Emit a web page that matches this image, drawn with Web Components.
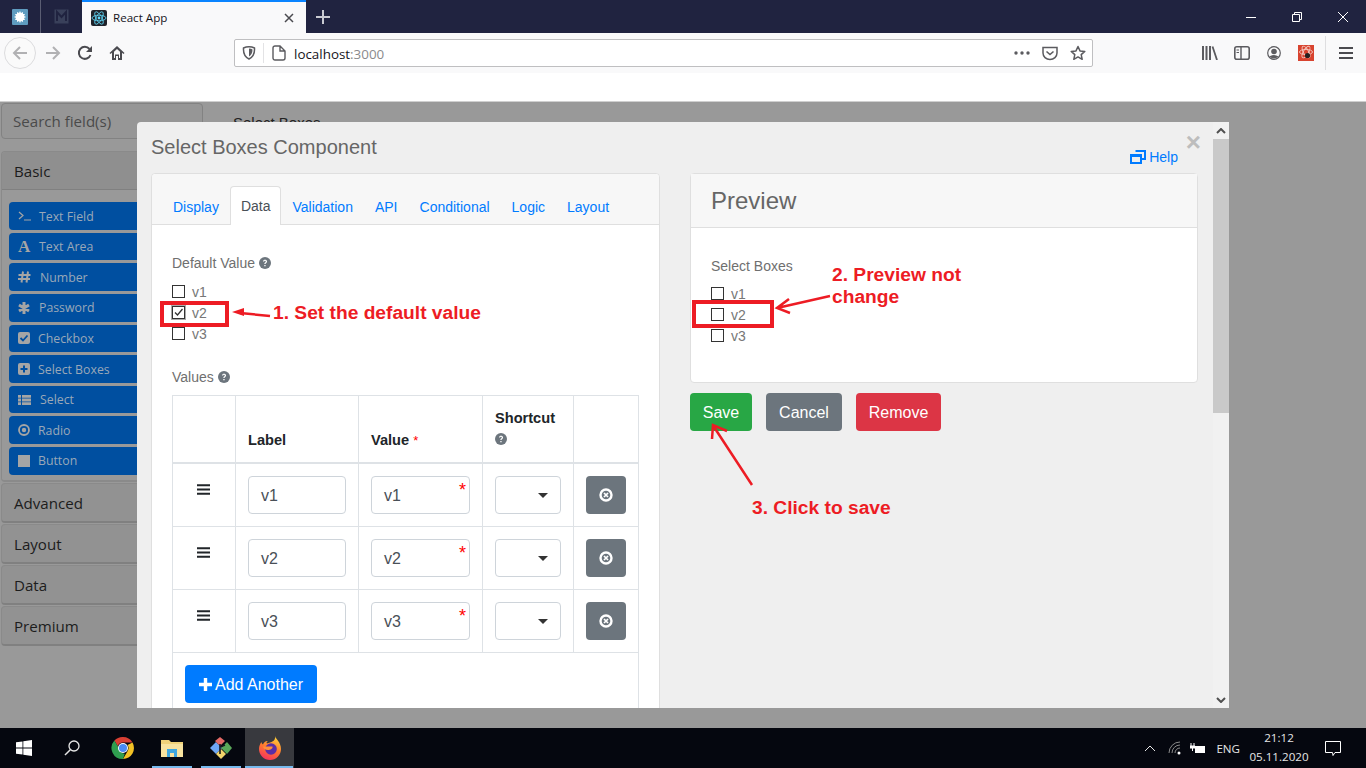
<!DOCTYPE html>
<html>
<head>
<meta charset="utf-8">
<title>React App</title>
<style>
  html, body { margin: 0; padding: 0; height: 100%; }
  body {
    width: 1366px;
    height: 768px;
    overflow: hidden;
    display: flex;
    flex-direction: column;
    position: relative;
    font-family: "Liberation Sans", Arial, sans-serif;
  }
</style>
</head>
<body>
  <browser-chrome></browser-chrome>
  <app-page></app-page>
  <win-taskbar></win-taskbar>
  <note-layer></note-layer>

<script>
// shared font awesome like help icon
const helpIcon = `<svg width="12" height="12" viewBox="0 0 12 12" style="vertical-align:-1px"><circle cx="6" cy="6" r="6" fill="#6c757d"/><path d="M4 4.6C4 3.4 5 2.8 6 2.8s2.1.6 2.1 1.7c0 1.5-1.6 1.4-1.6 2.6H5.3c0-1.8 1.5-1.7 1.5-2.6 0-.4-.4-.7-.8-.7-.5 0-.8.3-.9.8zM5.3 7.9h1.3v1.3H5.3z" fill="#fff"/></svg>`;

class BrowserChrome extends HTMLElement {
  constructor() {
    super();
    this.shadowDOM = this.attachShadow({ mode: 'open' });
  }

  connectedCallback() {
    this.shadowDOM.innerHTML = `
      <style>
        :host { display: block; height: 101px; background: #fff; font-family: "Open Sans", sans-serif; flex: none; }
        .tabs { height: 33px; background: #202340; display: flex; align-items: stretch; }
        .tab { width: 41px; display: flex; align-items: center; justify-content: center; box-sizing: border-box; padding-right: 1px; }
        .tab.sep { border-right: 1px solid #5a5d72; }
        .active {
          width: 224px; background: #f9f9fa; border-top: 2px solid #0a84ff; box-sizing: border-box;
          display: flex; align-items: center; padding: 0 12px 0 9px; gap: 6px;
          font-size: 11.600px; color: #15141a;
        }
        .active span { flex: 1; }
        .plus { width: 34px; display: flex; align-items: center; justify-content: center; }
        .fill { flex: 1; }
        .win { width: 46px; display: flex; align-items: center; justify-content: center; }
        .bar { height: 40px; background: #f9f9fa; display: flex; align-items: center; padding-left: 4px; }
        .btn { width: 32px; height: 32px; display: flex; align-items: center; justify-content: center; flex: none; }
        .btn.back { border: 1px solid #dcdcde; border-radius: 50%; box-sizing: border-box; background: #fafafa; margin-right: 1px; }
        .url {
          margin-left: 101px; width: 859px; height: 28px; box-sizing: border-box; background: #fff;
          border: 1px solid #bfbfc1; border-radius: 2px; display: flex; align-items: center;
          font-size: 13.4px; color: #15141a; flex: none;
        }
        .url .shield { width: 28px; display: flex; justify-content: center; }
        .url .line { width: 1px; height: 20px; background: #e3e3e5; }
        .url .page { width: 30px; display: flex; justify-content: center; }
        .url .host { flex: 1; padding-top: 1px; }
        .url .host i { font-style: normal; color: #8a8a8c; }
        .url .act { width: 28px; display: flex; justify-content: center; }
        .right { display: flex; align-items: center; margin-left: 101px; }
        .vline { width: 1px; height: 34px; background: #dedee0; margin: 0 4px 0 3px; }
      </style>
      <div class="tabs">
        <div class="tab sep">
          <svg width="16" height="16" viewBox="0 0 16 16"><rect width="16" height="16" rx="1" fill="#5f9cc0"/><path d="M8 2l1 2 2-1 0 2 2 0-1 2 2 1-2 1 1 2-2 0 0 2-2-1-1 2-1-2-2 1 0-2-2 0 1-2-2-1 2-1-1-2 2 0 0-2 2 1z" fill="#fff"/></svg>
        </div>
        <div class="tab">
          <svg width="15" height="15" viewBox="0 0 15 15"><rect x=".5" y=".5" width="14" height="14" fill="#39405a"/><path d="M3 12V3l4.500 5L12 3v9" fill="none" stroke="#202340" stroke-width="2"/></svg>
        </div>
        <div class="active">
          <svg width="16" height="16" viewBox="0 0 16 16"><rect width="16" height="16" rx="2" fill="#20232a"/><g fill="none" stroke="#61dafb" stroke-width=".8"><ellipse cx="8" cy="8" rx="7" ry="2.800"/><ellipse cx="8" cy="8" rx="7" ry="2.800" transform="rotate(60 8 8)"/><ellipse cx="8" cy="8" rx="7" ry="2.800" transform="rotate(120 8 8)"/></g><circle cx="8" cy="8" r="1.400" fill="#61dafb"/></svg>
          <span>React App</span>
          <svg width="10" height="10" viewBox="0 0 10 10"><path d="M1 1l8 8M9 1l-8 8" stroke="#4a4a4f" stroke-width="1.500"/></svg>
        </div>
        <div class="plus">
          <svg width="14" height="14" viewBox="0 0 14 14"><path d="M7 0v14M0 7h14" stroke="#c9cad2" stroke-width="2"/></svg>
        </div>
        <div class="fill"></div>
        <div class="win"><svg width="10" height="10" viewBox="0 0 10 10"><path d="M0 5.500h10" stroke="#fff"/></svg></div>
        <div class="win"><svg width="10" height="10" viewBox="0 0 10 10"><path d="M.5 2.500h7v7h-7zM2.500 2.500V.5h7v7h-2" fill="none" stroke="#fff"/></svg></div>
        <div class="win"><svg width="10" height="10" viewBox="0 0 10 10"><path d="M0 0l10 10M10 0L0 10" stroke="#fff"/></svg></div>
      </div>
      <div class="bar">
        <div class="btn back"><svg width="16" height="16" viewBox="0 0 16 16"><path d="M15 8H2M8 2L2 8l6 6" fill="none" stroke="#b1b1b3" stroke-width="2"/></svg></div>
        <div class="btn"><svg width="16" height="16" viewBox="0 0 16 16"><path d="M1 8h13M8 2l6 6-6 6" fill="none" stroke="#b1b1b3" stroke-width="2"/></svg></div>
        <div class="btn"><svg width="16" height="16" viewBox="0 0 16 16"><path d="M13.500 10A6 6 0 1 1 12.500 4" fill="none" stroke="#4a4a4f" stroke-width="2"/><path d="M15 1v6H9z" fill="#4a4a4f"/></svg></div>
        <div class="btn"><svg width="16" height="16" viewBox="0 0 16 16"><path d="M8 1L0.500 8l1 1L3 7.800V15h4v-4h2v4h4V7.800L14.500 9l1-1z" fill="#4a4a4f"/><path d="M5 6.800L8 4l3 2.800V13h-1V9.500H6V13H5z" fill="#f9f9fa"/></svg></div>
        <div class="url">
          <div class="shield"><svg width="14" height="14" viewBox="0 0 14 14"><path d="M1.500 2Q7-.5 12.500 2 13 10 7 13 1 10 1.500 2z" fill="none" stroke="#5b5b5f" stroke-width="1.500"/><path d="M7 2.500Q9.500 2.500 10.500 3.500 10.500 8.500 7 10.500z" fill="#5b5b5f"/></svg></div>
          <div class="line"></div>
          <div class="page"><svg width="14" height="16" viewBox="0 0 14 16"><path d="M1 3a2 2 0 0 1 2-2h5l5 5v7a2 2 0 0 1-2 2H3a2 2 0 0 1-2-2zM8 1v5h5" fill="none" stroke="#5b5b5f" stroke-width="1.400"/></svg></div>
          <div class="host">localhost<i>:3000</i></div>
          <div class="act"><svg width="16" height="4" viewBox="0 0 16 4"><circle cx="2" cy="2" r="1.700" fill="#5b5b5f"/><circle cx="8" cy="2" r="1.700" fill="#5b5b5f"/><circle cx="14" cy="2" r="1.700" fill="#5b5b5f"/></svg></div>
          <div class="act"><svg width="16" height="15" viewBox="0 0 16 15"><path d="M1 1.500h14V7a7 6.500 0 0 1-14 0z" fill="none" stroke="#5b5b5f" stroke-width="1.500"/><path d="M4.500 5.500L8 8.500l3.500-3" fill="none" stroke="#5b5b5f" stroke-width="1.600"/></svg></div>
          <div class="act"><svg width="16" height="16" viewBox="0 0 16 16"><path d="M8 1.500l2 4.400 4.800.5-3.600 3.200 1 4.700L8 11.900l-4.200 2.400 1-4.700L1.200 6.400 6 5.900z" fill="none" stroke="#5b5b5f" stroke-width="1.500" stroke-linejoin="round"/></svg></div>
        </div>
        <div class="right">
          <div class="btn"><svg width="16" height="14" viewBox="0 0 16 14"><path d="M1 0v14M4.500 0v14M8 0v14" stroke="#5b5b5f" stroke-width="2"/><path d="M10.500 .5L15 14" stroke="#5b5b5f" stroke-width="1.800"/></svg></div>
          <div class="btn"><svg width="16" height="14" viewBox="0 0 16 14"><rect x=".8" y=".8" width="14.400" height="12.400" rx="2" fill="none" stroke="#5b5b5f" stroke-width="1.600"/><path d="M7 1v12" stroke="#5b5b5f" stroke-width="1.400"/><path d="M2.500 4H5M2.500 6.500H5" stroke="#5b5b5f"/></svg></div>
          <div class="btn"><svg width="14" height="14" viewBox="0 0 14 14"><circle cx="7" cy="7" r="6.300" fill="none" stroke="#5b5b5f" stroke-width="1.200"/><circle cx="7" cy="5.500" r="2.800" fill="#5b5b5f"/><path d="M2.500 10.500Q7 7.500 11.500 10.500 7 14.500 2.500 10.500z" fill="#5b5b5f"/></svg></div>
          <div class="btn"><svg width="16" height="16" viewBox="0 0 16 16"><rect width="16" height="16" fill="#d8432f"/><g fill="none" stroke="#f4c9c0" stroke-width=".9"><ellipse cx="8" cy="7" rx="6.500" ry="2.600"/><ellipse cx="8" cy="7" rx="6.500" ry="2.600" transform="rotate(60 8 7)"/><ellipse cx="8" cy="7" rx="6.500" ry="2.600" transform="rotate(120 8 7)"/></g><circle cx="9.500" cy="10.500" r="2.600" fill="#26201f"/></svg></div>
          <div class="vline"></div>
          <div class="btn"><svg width="14" height="12" viewBox="0 0 14 12"><path d="M0 1h14M0 6h14M0 11h14" stroke="#4a4a4f" stroke-width="1.800"/></svg></div>
        </div>
      </div>
    `;
  }
}

class AppPage extends HTMLElement {
  constructor() {
    super();
    this.shadowDOM = this.attachShadow({ mode: 'open' });
  }

  connectedCallback() {
    this.shadowDOM.innerHTML = `
      <style>
        :host { display: block; flex: 1; min-height: 0; background: #999; position: relative; overflow: hidden; border-top: 1px solid #cfcfcf; box-sizing: border-box; }
        .wrap { display: flex; gap: 30px; height: 100%; }
        .behind { font: 15px "Liberation Sans", sans-serif; color: #222; padding-top: 12px; }
      </style>
      <div class="wrap">
        <form-sidebar></form-sidebar>
        <div class="behind">Select Boxes</div>
      </div>
      <edit-modal></edit-modal>
    `;
  }
}

class FormSidebar extends HTMLElement {
  constructor() {
    super();
    this.shadowDOM = this.attachShadow({ mode: 'open' });
  }

  connectedCallback() {
    const icons = {
      terminal: `<svg width="13" height="10" viewBox="0 0 13 10"><path d="M1 1l4 3.500L1 8M6 9h7" fill="none" stroke="#a5a5a5" stroke-width="1.200"/></svg>`,
      font: `<b style="font:bold 17px 'Liberation Serif',serif;color:#a5a5a5">A</b>`,
      hash: `<svg width="13" height="12" viewBox="0 0 13 12"><path d="M5 .5L3.500 11.500M10 .5L8.500 11.500M.5 4h12M0 8h12" fill="none" stroke="#a5a5a5" stroke-width="2"/></svg>`,
      star: `<svg width="12" height="12" viewBox="0 0 12 12"><path d="M6 6V0M6 6L1 3M6 6l5-3M6 6l-5 3M6 6l5 3M6 6v6" stroke="#a5a5a5" stroke-width="3"/></svg>`,
      check: `<svg width="12" height="12" viewBox="0 0 12 12"><rect width="12" height="12" rx="2" fill="#a5a5a5"/><path d="M2.500 6l2.500 2.500 4.500-5" fill="none" stroke="#004fa0" stroke-width="1.800"/></svg>`,
      plus: `<svg width="12" height="12" viewBox="0 0 12 12"><rect width="12" height="12" rx="2" fill="#a5a5a5"/><path d="M6 2.500v7M2.500 6h7" stroke="#004fa0" stroke-width="2"/></svg>`,
      list: `<svg width="13" height="10" viewBox="0 0 13 10"><path d="M0 0h3v2.800H0zM4 0h9v2.800H4zM0 3.600h3v2.800H0zM4 3.600h9v2.800H4zM0 7.200h3V10H0zM4 7.200h9V10H4z" fill="#a5a5a5"/></svg>`,
      dot: `<svg width="12" height="12" viewBox="0 0 12 12"><circle cx="6" cy="6" r="5" fill="none" stroke="#a5a5a5" stroke-width="1.800"/><circle cx="6" cy="6" r="2.200" fill="#a5a5a5"/></svg>`,
      stop: `<svg width="12" height="12" viewBox="0 0 12 12"><rect width="12" height="12" fill="#a5a5a5"/></svg>`
    };
    const items = [
      ['terminal', 'Text Field', 17], ['font', 'Text Area', 17], ['hash', 'Number', 18],
      ['star', 'Password', 17], ['check', 'Checkbox', 16], ['plus', 'Select Boxes', 16],
      ['list', 'Select', 18], ['dot', 'Radio', 16], ['stop', 'Button', 16]
    ];
    const rows = items.map(([icon, text, gap]) => `
      <div class="item"><span class="ic" style="width:${gap}px">${icons[icon]}</span><span>${text}</span></div>
    `).join('');
    const groups = ['Advanced', 'Layout', 'Data', 'Premium'].map(name => `
      <div class="group">${name}</div>
    `).join('');

    this.shadowDOM.innerHTML = `
      <style>
        :host { display: block; width: 203px; box-sizing: border-box; flex: none; padding: 1px 0 0 1px; font-family: "Open Sans", sans-serif; color: #1c1c1c; }
        .search {
          height: 36px; box-sizing: border-box; border: 1px solid #828282; border-radius: 4px; background: #969696;
          font-size: 15.100px; color: #4a4a4a; padding: 0 11px; display: flex; align-items: center; margin-bottom: 12px;
        }
        .card { border: 1px solid #8a8a8a; border-radius: 4px; border-bottom-width: 2px; margin-bottom: 1px; overflow: hidden; }
        .head { height: 38px; background: #8f8f8f; border-bottom: 1px solid #808080; display: flex; align-items: center; padding-left: 12px; font-size: 15.100px; box-sizing: border-box; }
        .list { padding: 12.300px 7px 5.700px 7px; display: flex; flex-direction: column; gap: 3px; background: #999; }
        .item {
          height: 27.600px; background: #004fa0; border-radius: 4px; color: #9aa8b8; font-size: 12.300px;
          display: flex; align-items: center; padding-left: 9px; box-sizing: border-box;
        }
        .ic { display: inline-flex; align-items: center; margin-right: 4px; }
        .group {
          height: 40px; margin-top: 1px; box-sizing: border-box; background: #929292; border: 1px solid #8a8a8a; border-bottom: 2px solid #808080;
          border-radius: 4px; display: flex; align-items: center; padding-left: 12px; font-size: 15.100px;
        }
      </style>
      <div class="search">Search field(s)</div>
      <div class="card">
        <div class="head">Basic</div>
        <div class="list">${rows}</div>
      </div>
      ${groups}
    `;
  }
}

class CheckRow extends HTMLElement {
  constructor() {
    super();
    this.shadowDOM = this.attachShadow({ mode: 'open' });
  }

  connectedCallback() {
    const checked = this.hasAttribute('checked');
    this.shadowDOM.innerHTML = `
      <style>
        :host { display: flex; align-items: center; height: 21px; gap: 7px; font-size: 14px; color: #777; }
        .box { width: 13px; height: 13px; box-sizing: border-box; border: 1px solid #333; background: #fff; display: flex; }
        .box.on { outline: 1px solid #aaa; }
      </style>
      <span class="box ${checked ? 'on' : ''}">
        ${checked ? '<svg width="11" height="11" viewBox="0 0 11 11"><path d="M2 5.500l2.500 2.500L9.500 2" fill="none" stroke="#333" stroke-width="1.300"/></svg>' : ''}
      </span>
      <slot></slot>
    `;
  }
}

class ValuesTable extends HTMLElement {
  constructor() {
    super();
    this.shadowDOM = this.attachShadow({ mode: 'open' });
  }

  connectedCallback() {
    const rows = ['v1', 'v2', 'v3'].map(v => `
      <div class="row">
        <div class="cell drag"><svg width="13" height="11" viewBox="0 0 13 11"><path d="M0 1.200h13M0 5.500h13M0 9.800h13" stroke="#212529" stroke-width="2"/></svg></div>
        <div class="cell"><div class="input">${v}</div></div>
        <div class="cell"><div class="input">${v}<i>*</i></div></div>
        <div class="cell"><div class="input select"><span class="caret"></span></div></div>
        <div class="cell"><div class="del"><svg width="14" height="14" viewBox="0 0 14 14"><circle cx="7" cy="7" r="5.500" fill="none" stroke="#fff" stroke-width="2.400"/><path d="M5 5l4 4M9 5l-4 4" stroke="#fff" stroke-width="1.700"/></svg></div></div>
      </div>
    `).join('');

    this.shadowDOM.innerHTML = `
      <style>
        :host { display: block; width: 467px; border: solid #dee2e6; border-width: 1px 1px 0 0; box-sizing: border-box; font-size: 14px; color: #212529; }
        .row { display: grid; grid-template-columns: 63px 123px 124px 91px 65px; border-bottom: 1px solid #dee2e6; }
        .row.top { height: 68px; border-bottom-width: 2px; box-sizing: border-box; }
        .cell { border-left: 1px solid #dee2e6; padding: 12px; }
        .top .cell { font-weight: bold; font-size: 14.600px; display: flex; flex-direction: column; justify-content: flex-end; padding-bottom: 11px; box-sizing: border-box; }
        .top .cell span { line-height: 21px; }
        .top .cell.short { padding-top: 12px; justify-content: flex-start; padding-bottom: 0; }
        .top i { color: #f00; font-style: normal; font-weight: normal; font-size: 13px; }
        .drag { text-align: center; line-height: 0; padding: 20px 13px 0 11px; }
        .input {
          height: 38px; box-sizing: border-box; border: 1px solid #ced4da; border-radius: 4px; background: #fff;
          font-size: 16px; color: #495057; padding: 2px 12px 0; display: flex; align-items: center; position: relative;
        }
        .input i { position: absolute; right: 3px; top: 3px; color: #f00; font-style: normal; font-size: 18px; line-height: 20px; }
        .select { width: 66px; }
        .caret { position: absolute; right: 12px; top: 16px; border: 5px solid transparent; border-top-color: #333; border-bottom: 0; }
        .del { width: 40px; height: 38px; background: #6c757d; border-radius: 4px; display: flex; align-items: center; justify-content: center; }
        .foot { border-left: 1px solid #dee2e6; padding: 12px; height: 120px; box-sizing: border-box; }
        .add {
          width: 132px; height: 38px; box-sizing: border-box; padding-top: 1px; background: #007bff; border-radius: 4px; color: #fff; font-size: 16px;
          display: flex; align-items: center; justify-content: center; gap: 3px;
        }
      </style>
      <div class="row top">
        <div class="cell"></div>
        <div class="cell"><span>Label</span></div>
        <div class="cell"><span>Value <i>*</i></span></div>
        <div class="cell short"><span>Shortcut</span><span>${helpIcon}</span></div>
        <div class="cell"></div>
      </div>
      ${rows}
      <div class="foot">
        <div class="add"><svg width="13" height="13" viewBox="0 0 13 13"><path d="M6.500 0v13M0 6.500h13" stroke="#fff" stroke-width="3.400"/></svg>Add Another</div>
      </div>
    `;
  }
}

class EditModal extends HTMLElement {
  constructor() {
    super();
    this.shadowDOM = this.attachShadow({ mode: 'open' });
  }

  connectedCallback() {
    const tabs = ['Display', 'Data', 'Validation', 'API', 'Conditional', 'Logic', 'Layout'].map(name => `
      <span class="tab ${name === 'Data' ? 'on' : ''}">${name}</span>
    `).join('');

    this.shadowDOM.innerHTML = `
      <style>
        :host {
          position: absolute; left: 137px; top: 20px; width: 1092px; height: 586px; background: #efefef;
          border-radius: 4px 0 0 0; overflow: hidden; display: flex; font-family: "Liberation Sans", sans-serif;
        }
        .main { flex: 1; padding: 14px 15px 0 14px; box-sizing: border-box; min-width: 0; }
        .top { height: 37px; display: flex; justify-content: space-between; position: relative; }
        h4 { margin: 0; font-weight: normal; font-size: 20px; line-height: 22px; color: #666; }
        .help { position: absolute; right: 20px; top: 13px; font-size: 14px; color: #007bff; display: flex; align-items: center; gap: 3px; }
        .close { position: absolute; right: -3px; top: -1px; font: bold 26px "Liberation Sans", sans-serif; color: #bdbdbd; line-height: 14px; }
        .cols { display: flex; gap: 30px; }
        .left { width: 509px; flex: none; background: #fff; border: 1px solid #dfdfdf; border-radius: 4px; box-sizing: border-box; }
        .tabs { height: 51px; background: #f7f7f7; border-bottom: 1px solid #dfdfdf; display: flex; align-items: flex-end; padding-left: 10px; box-sizing: border-box; border-radius: 4px 4px 0 0; }
        .tab { font-size: 14px; color: #007bff; height: 38px; line-height: 38px; padding: 0 10px; box-sizing: border-box; margin-bottom: -1px; border: 1px solid transparent; border-bottom: 0; }
        .tab.on { background: #fff; color: #495057; border-color: #dfdfdf; border-radius: 4px 4px 0 0; height: 39px; }
        .body { padding: 28px 20px 0 20px; }
        .lbl { font-size: 14px; color: #6f6f6f; line-height: 20px; }
        .checks { margin: 8px 0 23px; }
        .right { width: 508px; flex: none; }
        .prev { height: 210px; background: #fff; border: 1px solid #dfdfdf; border-radius: 4px; box-sizing: border-box; }
        .prev h3 { margin: 0; height: 54px; background: #f7f7f7; border-bottom: 1px solid #dfdfdf; box-sizing: border-box; font-weight: normal; font-size: 24px; color: #666; display: flex; align-items: center; padding-left: 20px; }
        .prev .in { padding: 28px 20px 0 20px; }
        .prev .checks { margin: 7px 0 0; }
        .btns { display: flex; gap: 14px; margin-top: 10px; }
        .b { height: 38px; box-sizing: border-box; padding-top: 1px; border-radius: 4px; color: #fff; font-size: 16px; display: flex; align-items: center; justify-content: center; }
        .scroll { width: 16px; flex: none; background: #f1f1f1; display: flex; flex-direction: column; }
        .arrow { height: 17px; display: flex; align-items: center; justify-content: center; }
        .thumb { height: 274px; background: #c9c9c9; }
        .gap { flex: 1; }
      </style>
      <div class="main">
        <div class="top">
          <h4>Select Boxes Component</h4>
          <div class="help">
            <svg width="16" height="14" viewBox="0 0 16 14"><path d="M5.500 1h9.500v8H11" fill="none" stroke="#007bff" stroke-width="2"/><rect x="1" y="5" width="10" height="8" fill="none" stroke="#007bff" stroke-width="2"/><path d="M1 6h10" stroke="#007bff" stroke-width="2"/></svg>
            Help
          </div>
          <div class="close">×</div>
        </div>
        <div class="cols">
          <div class="left">
            <div class="tabs">${tabs}</div>
            <div class="body">
              <div class="lbl">Default Value ${helpIcon}</div>
              <div class="checks">
                <check-row>v1</check-row>
                <check-row checked>v2</check-row>
                <check-row>v3</check-row>
              </div>
              <div class="lbl" style="margin-bottom:8px">Values ${helpIcon}</div>
              <values-table></values-table>
            </div>
          </div>
          <div class="right">
            <div class="prev">
              <h3>Preview</h3>
              <div class="in">
                <div class="lbl">Select Boxes</div>
                <div class="checks">
                  <check-row>v1</check-row>
                  <check-row>v2</check-row>
                  <check-row>v3</check-row>
                </div>
              </div>
            </div>
            <div class="btns">
              <div class="b" style="width:62px;background:#28a745">Save</div>
              <div class="b" style="width:76px;background:#6c757d">Cancel</div>
              <div class="b" style="width:85px;background:#dc3545">Remove</div>
            </div>
          </div>
        </div>
      </div>
      <div class="scroll">
        <div class="arrow"><svg width="10" height="6" viewBox="0 0 10 6"><path d="M1 5l4-4 4 4" fill="none" stroke="#505050" stroke-width="2"/></svg></div>
        <div class="thumb"></div>
        <div class="gap"></div>
        <div class="arrow"><svg width="10" height="6" viewBox="0 0 10 6"><path d="M1 1l4 4 4-4" fill="none" stroke="#505050" stroke-width="2"/></svg></div>
      </div>
    `;
  }
}

class WinTaskbar extends HTMLElement {
  constructor() {
    super();
    this.shadowDOM = this.attachShadow({ mode: 'open' });
  }

  connectedCallback() {
    this.shadowDOM.innerHTML = `
      <style>
        :host { display: flex; flex: none; height: 40px; background: #05070f; color: #e6e6e6; font-family: "Open Sans", sans-serif; align-items: stretch; }
        .cell { width: 49px; display: flex; align-items: center; justify-content: center; position: relative; box-sizing: border-box; }
        .cell.run::after { content: ""; position: absolute; left: 5px; right: 4px; bottom: 0; height: 2px; background: #76b9ed; }
        .cell.act { background: #38393e; }
        .cell.act::after { left: 0; right: 1px; }
        .fill { flex: 1; }
        .tray { display: flex; align-items: center; font-size: 11.600px; }
        .clock { width: 68px; text-align: center; line-height: 19px; margin: -2px 0 0 5px; }
      </style>
      <div class="cell" style="width:48px"><svg width="16" height="16" viewBox="0 0 16 16"><path d="M0 2.300l6.500-.9v6.200H0zM7.300 1.300L16 0v7.600H7.300zM0 8.400h6.500v6.200L0 13.700zM7.300 8.400H16V16l-8.700-1.300z" fill="#fff"/></svg></div>
      <div class="cell" style="width:47px;margin-right:3px"><svg width="16" height="16" viewBox="0 0 16 16"><circle cx="10" cy="6" r="5" fill="none" stroke="#e6e6e6" stroke-width="1.300"/><path d="M6.300 9.700L1 15" stroke="#e6e6e6" stroke-width="1.500"/></svg></div>
      <div class="cell"><svg width="24" height="24" viewBox="0 0 24 24"><path d="M12 1a11 11 0 0 1 9.500 5.500H12a5.500 5.500 0 0 0-5.200 3.700L3.400 4.600A11 11 0 0 1 12 1z" fill="#d93f33"/><path d="M21.500 6.500A11 11 0 0 1 12 23l4.800-8.200A5.500 5.500 0 0 0 16.500 9z" fill="#f3c125"/><path d="M12 23A11 11 0 0 1 3.400 4.600l4.800 8.200a5.500 5.500 0 0 0 5.600 4.900z" fill="#2f9e4f"/><circle cx="12" cy="12" r="5" fill="#fff"/><circle cx="12" cy="12" r="4" fill="#4a8af4"/></svg></div>
      <div class="cell run"><svg width="22" height="18" viewBox="0 0 22 18"><path d="M0 1h8l2 2h12v15H0z" fill="#f0d27a"/><path d="M0 5h22v13H0z" fill="#f8e3a0"/><path d="M6 10h10v8h-3v-4H9v4H6z" fill="#3fa7e0"/></svg></div>
      <div class="cell run"><svg width="24" height="24" viewBox="0 0 24 24"><path d="M1 12l6-6 6 6-6 6z" fill="#6ea6f5"/><path d="M6 5l5-4 5 4-5 5z" fill="#e56a67"/><path d="M12 12l6-6 5 6-5 6z" fill="#5aa85a"/><path d="M7 18l5-5 5 5-5 5z" fill="#f2d46b"/><path d="M11 8v10M11 11l5-2" stroke="#16181f" stroke-width="1.600"/></svg></div>
      <div class="cell run act"><svg width="24" height="24" viewBox="0 0 24 24"><defs><linearGradient id="fx" x1="0.700" y1="0" x2="0.300" y2="1"><stop offset="0" stop-color="#ffd23a"/><stop offset="0.500" stop-color="#ff7a2e"/><stop offset="1" stop-color="#f5305f"/></linearGradient></defs><path d="M17 0c.5 3 6 6 6 13a11 11 0 0 1-22 0c0-3 1-5 2.500-7 0 1 .5 2 1.500 2.500C6 6 8 4.500 10 5c-2 1-1.500 2-1 2.500 4-1.500 9-2 8-7.500z" fill="url(#fx)"/><circle cx="13" cy="13" r="5.800" fill="#5a2ea6"/><path d="M5 10.500h9.500c.5 2-2 3.500-4.500 3.500-2.800 0-4.500-1.500-5-3.500z" fill="#ff8f3a"/></svg></div>
      <div class="fill"></div>
      <div class="tray">
        <svg width="12" height="7" viewBox="0 0 12 7" style="margin-right:12px"><path d="M1 6l5-5 5 5" fill="none" stroke="#e6e6e6"/></svg>
        <svg width="14" height="14" viewBox="0 0 14 14" style="margin-right:8px"><path d="M1 12A11 11 0 0 1 12 1M4 12A8 8 0 0 1 12 4M7 12A5 5 0 0 1 12 7" fill="none" stroke="#8a8a8a"/><circle cx="11" cy="12" r="1.500" fill="#fff"/></svg>
        <svg width="16" height="11" viewBox="0 0 16 11" style="margin-right:10px"><path d="M1 0v3M4 0v3M0 3h5v2H0zM2.500 5v3" stroke="#fff" fill="#fff"/><rect x="5" y="3" width="10" height="7" fill="#fff"/></svg>
        <span>ENG</span>
        <div class="clock">21:12<br>05.11.2020</div>
        <svg width="16" height="15" viewBox="0 0 16 15" style="margin:0 25px 0 12px"><path d="M.5.5h15v11h-5.500l-2 3-.5-3H.5z" fill="none" stroke="#fff"/></svg>
      </div>
    `;
  }
}

// red marks drawn on the screenshot
class NoteLayer extends HTMLElement {
  constructor() {
    super();
    this.shadowDOM = this.attachShadow({ mode: 'open' });
  }

  connectedCallback() {
    this.shadowDOM.innerHTML = `
      <style>
        :host { position: absolute; left: 0; top: 0; width: 1366px; height: 768px; pointer-events: none; }
        .t { position: absolute; font: bold 19.200px/22px "Liberation Sans", sans-serif; color: #ed1c24; white-space: nowrap; }
        .r { position: absolute; border: 4px solid #ed1c24; box-sizing: border-box; }
        svg { position: absolute; left: 0; top: 0; }
      </style>
      <div class="r" style="left:160px;top:301px;width:69px;height:26px"></div>
      <div class="r" style="left:692px;top:300px;width:82px;height:28px"></div>
      <svg width="1366" height="768" fill="none" stroke="#ed1c24" stroke-width="2.500">
        <path d="M270 316L240 313"/><path d="M232 312l12-4v8z" fill="#ed1c24" stroke="none"/>
        <path d="M830 296L777 308M789 299L777 308 790 313"/>
        <path d="M752 485L714 427M712 439L713 425 727 431"/>
      </svg>
      <div class="t" style="left:273px;top:302px">1. Set the default value</div>
      <div class="t" style="left:832px;top:264px">2. Preview not<br>change</div>
      <div class="t" style="left:752px;top:497px">3. Click to save</div>
    `;
  }
}

customElements.define('browser-chrome', BrowserChrome);
customElements.define('app-page', AppPage);
customElements.define('form-sidebar', FormSidebar);
customElements.define('check-row', CheckRow);
customElements.define('values-table', ValuesTable);
customElements.define('edit-modal', EditModal);
customElements.define('win-taskbar', WinTaskbar);
customElements.define('note-layer', NoteLayer);
</script>
</body>
</html>
